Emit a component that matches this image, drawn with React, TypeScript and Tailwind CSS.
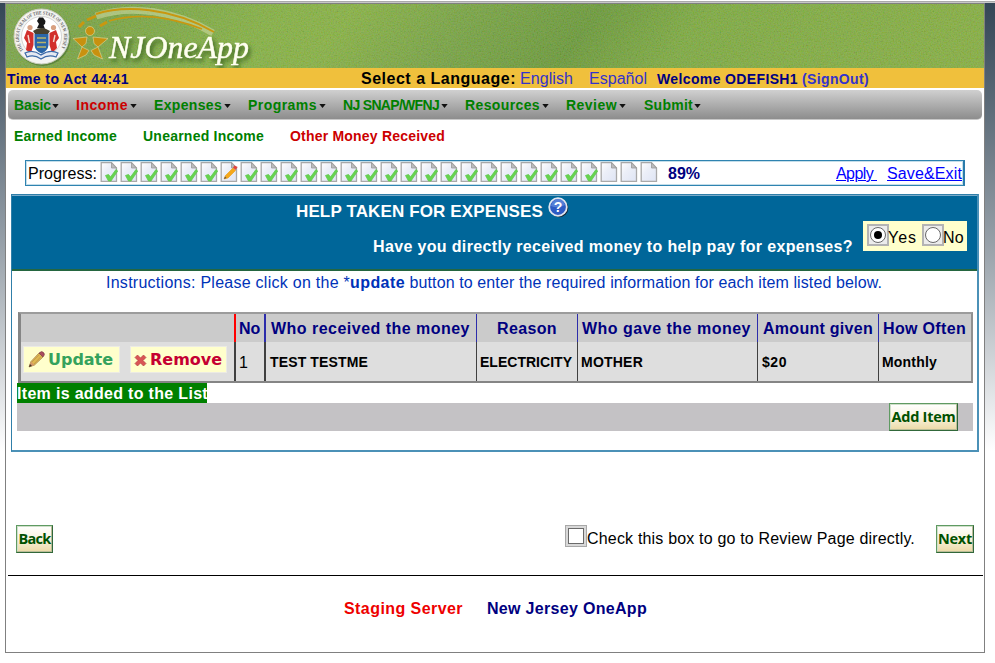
import { useLayoutEffect, useRef } from "react";

type FitProps = { w: number; children: string; className?: string };

/* Single-line label whose tracking is spread so the text fills a given width. */
function Fit({ w, children, className = "" }: FitProps) {
  const ref = useRef<HTMLSpanElement>(null);
  useLayoutEffect(() => {
    const el = ref.current;
    if (!el) return;
    el.style.letterSpacing = "0px";
    const natural = el.getBoundingClientRect().width;
    el.style.letterSpacing = `${(w - natural) / children.length}px`;
  }, [w, children]);
  return (
    <span ref={ref} className={`inline-block shrink-0 whitespace-pre ${className}`}>
      {children}
    </span>
  );
}

const menu = [
  { label: "Basic", w: 37, gap: "mr-[17px]", arrow: "ml-px" },
  { label: "Income", w: 52, gap: "mr-[17px]", arrow: "ml-[2px]", active: true },
  { label: "Expenses", w: 68, gap: "mr-[17px]", arrow: "ml-[2px]" },
  { label: "Programs", w: 69, gap: "mr-[17px]", arrow: "ml-[2px]" },
  { label: "NJ SNAP/WFNJ", w: 96, gap: "mr-[17px]", arrow: "ml-[2px]" },
  { label: "Resources", w: 75, gap: "mr-[17px]", arrow: "ml-[2px]" },
  { label: "Review", w: 51, gap: "mr-[18px]", arrow: "ml-[2px]" },
  { label: "Submit", w: 49, gap: "", arrow: "ml-px" },
];

function Seal() {
  return (
    <g>
      <circle cx="36.500" cy="34" r="28" fill="#47702f" opacity=".6" />
      <circle cx="35.500" cy="32.500" r="27.500" fill="#f4f4f2" stroke="#c9cdbd" strokeWidth="1" />
      <circle cx="35.500" cy="32.500" r="20" fill="#fff" stroke="#bbb" strokeWidth=".6" />
      <defs>
        <path id="ring" d="M17.500 46.500 A22.500 22.500 0 1 1 53.500 46.500" />
      </defs>
      <text fontSize="5" fontWeight="700" fill="#666" fontFamily="Liberation Serif, serif">
        <textPath href="#ring" textLength="96" lengthAdjust="spacingAndGlyphs">THE GREAT SEAL OF THE STATE OF NEW JERSEY</textPath>
      </text>
      <path d="M31 24 L33 20 L31 17 L33 13.500 L37 13.500 L39.500 17 L39 20 L37.500 21 L39 25Z" fill="#191919" />
      <path d="M27 27 Q35 21 44 27 L42 30 H29Z" fill="#47412f" />
      <path d="M28.500 30 H42.500 V41 Q42 47 35.500 49.500 Q29 47 28.500 41Z" fill="#2a66a8" />
      <path d="M31 34 h9 M31 38.500 h9 M31 43 h9" stroke="#b7b46a" strokeWidth="1.600" />
      <path d="M21 26 L27.500 29 L27.500 41 L25 49 L20 46 L21 39 L18 34Z" fill="#d22f2c" />
      <path d="M50 26 L43.500 29 L43.500 41 L46 49 L51 44 L50 38 L53 34Z" fill="#d22f2c" />
      <circle cx="24" cy="23.500" r="2.600" fill="#d8a080" />
      <circle cx="47.500" cy="23.500" r="2.600" fill="#d8a080" />
      <path d="M22 31 l1.500 8 M49 31 l-1.500 7" stroke="#f2d9d0" strokeWidth="1.400" />
      <path d="M19 49 Q27 45 35 51 Q44 45 52 49 L50 53 Q42 50 35 55 Q28 50 21 53Z" fill="#e4e9f2" stroke="#3c6aa8" strokeWidth="1.200" />
    </g>
  );
}

function Banner() {
  return (
    <svg className="block h-[64px] w-[978px] shrink-0" viewBox="0 0 978 64">
      <defs>
        <linearGradient id="grass" x1="0" x2="1" y1="0" y2="0.050">
          <stop offset="0" stopColor="#7da552" />
          <stop offset=".1" stopColor="#78a24a" />
          <stop offset=".28" stopColor="#86b04a" />
          <stop offset=".36" stopColor="#88b04a" />
          <stop offset=".47" stopColor="#79a34a" />
          <stop offset=".61" stopColor="#6b9840" />
          <stop offset=".72" stopColor="#7ea947" />
          <stop offset="1" stopColor="#86ad48" />
        </linearGradient>
        <filter id="grain" x="0" y="0" width="100%" height="100%">
          <feTurbulence type="fractalNoise" baseFrequency=".7" numOctaves="2" seed="4" />
          <feColorMatrix values="1.5 0 0 0 -0.300  0 1.5 0 0 -0.200  0 0 1.500 0 -0.500  0 0 0 0 1" />
        </filter>
      </defs>
      <rect width="978" height="64" fill="url(#grass)" />
      <rect width="978" height="64" filter="url(#grain)" opacity=".13" />
      <Seal />
      <g fill="none" strokeLinecap="butt">
        <path d="M90 12 C125 0 170 7 207 29" stroke="#d3dda8" strokeWidth="7" opacity=".55" />
        <path d="M90 10 C118 1 165 3 208 28" stroke="#c9970f" strokeWidth="2" />
        <path d="M103 17 C130 9 163 12 196 25" stroke="#c9970f" strokeWidth="1.800" />
        <path d="M73 23 l5 -5 M81 16 l9 -4 M94 22 l7 -4" stroke="#c9970f" strokeWidth="3" />
      </g>
      <g stroke="#dfdba0" strokeWidth=".6" fill="#c8910f">
        <circle cx="84" cy="27" r="4.500" />
        <path d="M67 34.500 L81 33 L80 39.500 L76 43Z" />
        <path d="M87 33 L102 34.500 L92 43 L88 39.500Z" />
        <path d="M76 43 L83 46.500 L80 51 L71.500 55Z" />
        <path d="M92 43 L96.500 55 L88 51 L85 46.500Z" />
      </g>
      <text
        x="103"
        y="54"
        textLength="140"
        lengthAdjust="spacingAndGlyphs"
        className="drop-shadow-[2px_3px_2px_#3b6420]"
        fontFamily="'Liberation Serif', serif"
        fontStyle="italic"
        fontSize="32"
        fill="#fffff0"
        stroke="#fffff0"
        strokeWidth=".5"
      >
        NJOneApp
      </text>
    </svg>
  );
}

function PageIcon({ kind }: { kind: "done" | "edit" | "blank" }) {
  return (
    <svg className="block h-[21px] w-[20px] shrink-0" viewBox="0 0 20 21">
      <defs>
        <linearGradient id="paper" x1="0" x2="1" y1="0" y2="1">
          <stop offset="0" stopColor="#fff" />
          <stop offset=".4" stopColor="#eceff8" />
          <stop offset="1" stopColor="#dfe5f5" />
        </linearGradient>
      </defs>
      <path d="M1.200 .7 H11.500 L16.500 6 V19.300 H1.200Z" fill="url(#paper)" stroke="#a9a9a9" strokeWidth="1.300" />
      <path d="M11.500 .7 V6 H16.500Z" fill="#bcbcbc" stroke="#999" strokeWidth=".8" />
      {kind === "done" && (
        <path d="M5.500 13.500 L8.500 12.500 L10.500 15 L16 7.500 L17.700 9 L11 19 L8.500 19Z" fill="#68d34f" stroke="#5fca4c" strokeWidth=".8" />
      )}
      {kind === "edit" && (
        <g>
          <path d="M4 17 L5.500 13.500 L13 6 L15.500 8.500 L8 16Z" fill="#f5a81c" stroke="#e89a16" strokeWidth=".6" />
          <path d="M4 17 L5 14.500 L6.500 16Z" fill="#5d5148" />
          <path d="M13 5.500 L14.500 3.500 L17.700 5 L15.500 8Z" fill="#e04440" />
        </g>
      )}
    </svg>
  );
}

function Progress() {
  return (
    <div className="ml-[19px] flex h-[26px] w-[940px] border border-[#2f83b0] border-r-2 border-r-[#2a7cab] border-b-[#2f83b0]">
      <div className="flex h-[24px] w-full border border-[#c4deea] text-base leading-[23px] text-black">
        <Fit w={69} className="ml-px mr-[3px]">Progress:</Fit>
        {Array.from({ length: 28 }, (_, i) => (
          <PageIcon key={i} kind={i === 6 ? "edit" : i > 24 ? "blank" : "done"} />
        ))}
        <Fit w={32} className="ml-[8px] font-bold text-[#000080]">89%</Fit>
        <div className="ml-auto flex gap-[10px] text-[#0000ff] underline">
          <Fit w={41}>Apply </Fit>
          <Fit w={75}>Save&Exit</Fit>
        </div>
      </div>
    </div>
  );
}

function HelpIcon() {
  return (
    <svg className="ml-[5px] mt-px block h-[21px] w-[21px]" viewBox="0 0 21 21">
      <circle cx="11.200" cy="11.200" r="9" fill="#16202c" />
      <circle cx="10" cy="10" r="8.800" fill="#2d5bc4" stroke="#dfe5ef" strokeWidth="1.800" />
      <path d="M3 9 Q10 12 17 8 Q15 2 10 2 Q4 3 3 9" fill="#7197e4" opacity=".6" />
      <text x="10" y="15" fontSize="14" fontWeight="700" textAnchor="middle" fill="#fff" fontFamily="Liberation Sans, sans-serif">?</text>
    </svg>
  );
}

function Radio({ on = false }: { on?: boolean }) {
  return (
    <span className="flex h-[22px] w-[22px] shrink-0 items-center justify-center border-2 border-[#b4b4b4] bg-[#ececec]">
      <span className="flex h-[16px] w-[16px] shrink-0 items-center justify-center rounded-full border border-[#686868] bg-white">
        {on && <span className="h-[8px] w-[8px] rounded-full bg-black" />}
      </span>
    </span>
  );
}

function GoldButton({ label, w, className }: { label: string; w: number; className: string }) {
  return (
    <button
      className={`flex h-[28px] shrink-0 justify-center border border-[#5f9a62] border-b-[#31683a] border-r-[#31683a] bg-linear-to-b from-white via-[#f8f3df] to-[#ecd9a5] font-['Open_Sans',sans-serif] text-[14.5px] font-bold leading-[25px] text-[#005000] shadow-[inset_-1px_-1px_0_#b9bd98,inset_1px_1px_0_#cfdfc9] ${className}`}
    >
      <Fit w={w}>{label}</Fit>
    </button>
  );
}

const columns = [
  { head: "No", hw: 21, value: "1", vw: 9, width: "w-[30px]", line: "border-l-2 border-l-[#ff0000]", low: "border-l-2 border-l-[#404040]", pad: "pl-[3px]", vpad: "pl-[3px]", plain: true },
  { head: "Who received the money", hw: 199, value: "TEST TESTME", vw: 98, width: "w-[212px]", line: "border-l-2 border-l-[#2c2cab]", low: "border-l-2 border-l-[#404040]", pad: "pl-[5px]", vpad: "pl-[4px]" },
  { head: "Reason", hw: 60, value: "ELECTRICITY", vw: 92, width: "w-[101px]", line: "border-l border-l-[#2c2cab]", low: "border-l border-l-[#404040]", pad: "pl-[20px]", vpad: "pl-[3px]" },
  { head: "Who gave the money", hw: 169, value: "MOTHER", vw: 62, width: "w-[180px]", line: "border-l border-l-[#2c2cab]", low: "border-l border-l-[#404040]", pad: "pl-[4px]", vpad: "pl-[3px]" },
  { head: "Amount given", hw: 110, value: "$20", vw: 25, width: "w-[121px]", line: "border-l border-l-[#2c2cab]", low: "border-l border-l-[#404040]", pad: "pl-[5px]", vpad: "pl-[4px]" },
  { head: "How Often", hw: 83, value: "Monthly", vw: 55, width: "w-[93px]", line: "border-l border-l-[#2c2cab]", low: "border-l border-l-[#404040]", pad: "pl-[4px]", vpad: "pl-[3px]" },
];

function ItemsTable() {
  return (
    <div className="ml-[6px] flex h-[71px] w-[955px] flex-col border-2 border-b-2 border-l-[3px] border-[#858585] border-r-[#909090] border-t-[#9c9c9c]">
      <div className="flex h-[28px] bg-[#cbcbcb] text-base font-bold leading-[30px] text-[#000080]">
        <div className="w-[213px] shrink-0" />
        {columns.map((c) => (
          <div key={c.head} className={`flex shrink-0 ${c.width} ${c.line} ${c.pad}`}>
            <Fit w={c.hw}>{c.head}</Fit>
          </div>
        ))}
      </div>
      <div className="flex h-[39px] bg-[#dedede] text-[14px] font-bold leading-[41px] text-black">
        <div className="flex w-[213px] shrink-0 gap-[10px] pl-[2px] pt-[4px] font-['DejaVu_Sans',sans-serif] text-[16px] leading-[26px]">
          <button className="flex h-[27px] w-[97px] border border-[#ecebe4] bg-[#ffffcc] text-[#35a25c]">
            <svg className="ml-[4px] mt-[4px] h-[17px] w-[17px]" viewBox="0 0 17 17">
              <path d="M1 16 L3 10.500 L11 2 L15 6 L6.500 14Z" fill="#e0b84f" stroke="#a07a45" strokeWidth=".7" />
              <path d="M4 11 L11.500 3.500 M6 13 L13.500 5" stroke="#b08c49" strokeWidth=".6" />
              <path d="M11 2 Q14 -1 16 2 Q17 4 15 6Z" fill="#aa4c5f" stroke="#753840" strokeWidth=".6" />
              <path d="M1 16 L3 10.500 L6.500 14Z" fill="#d4996b" />
              <path d="M1 16 L2 13 L4 15Z" fill="#433529" />
            </svg>
            <Fit w={65} className="ml-[3px]">Update</Fit>
          </button>
          <button className="flex h-[27px] w-[97px] border border-[#ecebe4] bg-[#ffffcc] text-[#c50032]">
            <svg className="ml-[3px] mt-[7px] h-[13px] w-[13px]" viewBox="0 0 13 13">
              <path d="M1 3.500 L3.500 1 L6.500 4 L9.500 1 L12 3.500 L9 6.500 L12 9.500 L9.500 12 L6.500 9 L3.500 12 L1 9.500 L4 6.500Z" fill="#d95555" stroke="#b84444" strokeWidth=".7" />
            </svg>
            <Fit w={72} className="ml-[3px]">Remove</Fit>
          </button>
        </div>
        {columns.map((c) => (
          <div key={c.head} className={`flex shrink-0 ${c.width} ${c.low} ${c.vpad}`}>
            <Fit w={c.vw} className={c.plain ? "text-[16px] font-normal" : ""}>{c.value}</Fit>
          </div>
        ))}
      </div>
    </div>
  );
}

function Panel() {
  return (
    <section className="ml-[5px] h-[258px] w-[968px] border border-[#307fa9] border-b-2 border-r-2 border-b-[#4b91b7] border-r-[#4b91b7]">
      <div className="h-[76px] border-b-2 border-t border-b-[#246640] border-t-[#78aac9] bg-[#006699] text-white">
        <div className="flex h-[25px] pl-[284px] text-[17px] font-bold leading-[31px]">
          <Fit w={247}>HELP TAKEN FOR EXPENSES</Fit>
          <HelpIcon />
        </div>
        <div className="flex h-[30px] pl-[361px]">
          <Fit w={480} className="pt-[12px] text-base font-bold leading-[28px]">Have you directly received money to help pay for expenses?</Fit>
          <div className="ml-[10px] flex h-[30px] w-[104px] bg-[#ffffcc] pl-[4px] pt-[3px] text-base leading-[27px] text-black">
            <Radio on />
            <Fit w={29} className="-ml-px mr-[5px]">Yes</Fit>
            <Radio />
            <Fit w={21} className="-ml-px">No</Fit>
          </div>
        </div>
      </div>
      <p className="flex h-[41px] pl-[94px] text-base leading-[24px] text-[#0033b8]">
        <Fit w={244}>Instructions: Please click on the *</Fit>
        <Fit w={55} className="font-bold">update</Fit>
        <Fit w={477}> button to enter the required information for each item listed below.</Fit>
      </p>
      <ItemsTable />
      <div className="ml-[5px] flex h-[20px] w-[190px] bg-[#008000] text-base font-bold leading-[21px] text-white">
        <Fit w={191}>Item is added to the List</Fit>
      </div>
      <div className="ml-[5px] flex h-[28px] w-[956px] justify-end bg-[#c4c2c5] pr-[15px]">
        <GoldButton label="Add Item" w={64} className="w-[69px]" />
      </div>
    </section>
  );
}

export default function App() {
  return (
    <main className="h-[663px] w-[995px] overflow-hidden bg-white font-['Liberation_Sans',Arial,sans-serif]">
      <div className="h-[3px] border-b border-t border-b-[#c8c8c8] border-t-white bg-[#aaaaaa]" />
      <div className="flex h-[650px] bg-linear-to-b from-[#344656] via-[#9aa3ab] via-38% to-white to-69%">
        <div className="ml-[5px] h-[650px] w-[980px] border border-[#808080] bg-white">
          <Banner />
          <div className="flex h-[20px] bg-[#f0c03c] pl-px text-[14px] font-bold leading-[22px] text-[#000080]">
            <Fit w={122} className="mr-[232px]">Time to Act 44:41</Fit>
            <Fit w={155} className="mr-[4px] text-base leading-[21px] text-black">Select a Language:</Fit>
            <Fit w={53} className="mr-[16px] text-base font-normal leading-[21px] text-[#3333cc]">English</Fit>
            <Fit w={58} className="mr-[10px] text-base font-normal leading-[21px] text-[#3333cc]">Español</Fit>
            <Fit w={141} className="mr-[4px]">Welcome ODEFISH1</Fit>
            <Fit w={67} className="text-[#3333cc]">(SignOut)</Fit>
          </div>
          <nav className="ml-[2px] mt-[2px] flex h-[30px] w-[974px] rounded-[5px] border-b border-[#c8c8c8] bg-linear-to-b from-[#d0d0d0] to-[#8d8d8d] pl-[6px] text-[14px] font-bold leading-[30px] text-[#008000]">
            {menu.map((m) => (
              <div key={m.label} className={`flex ${m.gap}`}>
                <Fit w={m.w} className={m.active ? "text-[#cc0000]" : ""}>{m.label}</Fit>
                <svg className={`mt-[14px] h-[5px] w-[7px] ${m.arrow}`} viewBox="0 0 7 5">
                  <path d="M.3 0 H6.700 L3.500 4Z" fill="#111" />
                </svg>
              </div>
            ))}
          </nav>
          <div className="flex h-[40px] pl-[8px] text-[14px] font-bold leading-[32px] text-[#008000]">
            <Fit w={103} className="mr-[26px]">Earned Income</Fit>
            <Fit w={121} className="mr-[26px]">Unearned Income</Fit>
            <Fit w={155} className="text-[#cc0000]">Other Money Received</Fit>
          </div>
          <Progress />
          <div className="h-[8px]" />
          <Panel />
          <div className="mt-[73px] flex h-[50px] pl-[10px]">
            <GoldButton label="Back" w={32} className="w-[37px]" />
            <span className="ml-[512px] flex h-[22px] w-[22px] items-center justify-center border border-[#a8a8a8] bg-[#d8d8d8]">
              <span className="h-[16px] w-[16px] border border-[#6a6a6a] bg-white" />
            </span>
            <Fit w={328} className="text-base leading-[27px]">Check this box to go to Review Page directly.</Fit>
            <GoldButton label="Next" w={34} className="ml-[21px] w-[38px]" />
          </div>
          <div className="ml-[2px] h-px w-[975px] bg-black" />
          <footer className="flex pl-[338px] pt-[22px] text-base font-bold leading-[22px]">
            <Fit w={119} className="mr-[24px] text-[#ee0000]">Staging Server</Fit>
            <Fit w={160} className="text-[#000080]">New Jersey OneApp</Fit>
          </footer>
        </div>
      </div>
    </main>
  );
}
